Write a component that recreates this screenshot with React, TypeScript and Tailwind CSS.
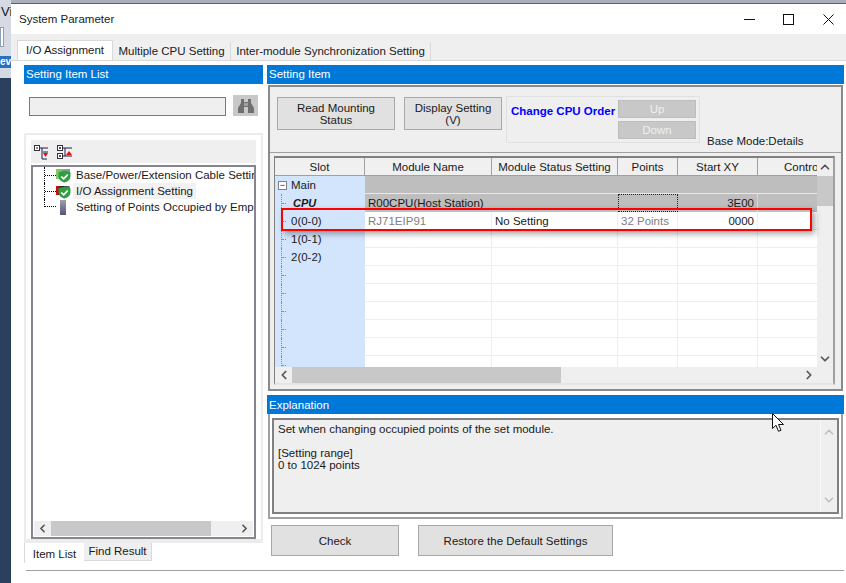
import { ChevronDown, ChevronLeft, ChevronRight, ChevronUp } from "lucide-react";

const columns = [
  { name: "Module Name", width: "w-[127px]" },
  { name: "Module Status Setting", width: "w-[126px]" },
  { name: "Points", width: "w-[60px]" },
  { name: "Start XY", width: "w-[80px]" },
];

const slots = ["", "", "0(0-0)", "1(0-1)", "2(0-2)", "", "", "", "", "", ""];

function GreenCheck({ className }: { className: string }) {
  return (
    <svg viewBox="0 0 12 12" className={className}>
      <path d="M6 .5 11.5 2v4c0 3-3 5-5.500 5.500C3.500 11 .5 9 .5 6V2z" fill="#2f9e44" />
      <path d="M3 6l2.200 2.200L9 4.200" fill="none" stroke="#fff" strokeWidth="1.600" />
    </svg>
  );
}

function TreeIcon({ kind }: { kind: "base" | "io" | "empty" }) {
  return (
    <div className="relative h-[15px] w-[15px] shrink-0">
      {kind === "base" && (
        <div className="absolute left-0 top-[1px] h-[10px] w-[14px] bg-gradient-to-r from-[#7fcf5f] to-[#909090]" />
      )}
      {kind === "io" && (
        <div className="absolute left-0 top-[2px] h-[9px] w-[14px] bg-gradient-to-r from-[#e00000] via-[#111111] to-[#909090]" />
      )}
      {kind === "empty" ? (
        <div className="ml-[4px] h-[15px] w-[6px] bg-gradient-to-b from-[#a0a0a8] to-[#55557f]" />
      ) : (
        <GreenCheck className="absolute left-[2px] top-[2px] h-[13px] w-[13px]" />
      )}
    </div>
  );
}

function Cursor() {
  return (
    <svg viewBox="0 0 13 20" className="absolute left-[772px] top-[413px] h-[20px] w-[13px]">
      <path
        d="M.5.500v15l3.500-3.200 2.500 6 2.500-1-2.500-5.800h5z"
        fill="#fff"
        stroke="#111"
        strokeWidth="1"
      />
    </svg>
  );
}

export default function App() {
  return (
    <div
      className="relative flex h-[583px] w-[846px] overflow-hidden bg-[#2b3f5f] text-[11.5px] leading-[12px] text-[#1a1a1a]"
      style={{ fontFamily: '"Liberation Sans", Arial, sans-serif' }}
    >
      {/* app behind the dialog */}
      <div className="flex h-[78px] w-[11px] flex-col bg-[#d6dbe3] pt-[6px] text-[13px]">
        <span className="pl-[1px]">Vi</span>
        <div className="mt-[9px] h-[20px] w-[4px] border border-[#8aa0b8] bg-white" />
        <div className="mt-[9px] h-[12px] bg-[#2a6fc0] text-[10px] leading-[12px] font-bold text-white">
          ev
        </div>
      </div>

      <div className="flex w-[835px] flex-col">
        <div className="h-[3px] bg-[#a9afbd]" />
        <div className="flex flex-1 flex-col border-t border-[#5a6070] bg-white">
          {/* title bar */}
          <div className="flex h-[30px] items-center pl-[8px] pr-[10px]">
            <span className="flex-1">System Parameter</span>
            <svg viewBox="0 0 11 11" className="mr-[28px] h-[11px] w-[11px]">
              <path d="M0 5.500h11" stroke="#111" strokeWidth="1" />
            </svg>
            <svg viewBox="0 0 11 11" className="mr-[29px] h-[11px] w-[11px]">
              <rect x=".5" y=".5" width="10" height="10" fill="none" stroke="#111" />
            </svg>
            <svg viewBox="0 0 11 11" className="mr-[2px] h-[11px] w-[11px]">
              <path d="M.5.500l10 10M10.500.500l-10 10" stroke="#111" strokeWidth="1" />
            </svg>
          </div>

          {/* tabs */}
          <div className="flex h-[27px] items-end border-b border-[#d9d9d9] bg-[#efefef] pl-[6px]">
            <div className="flex h-[20px] w-[96px] items-center justify-center border border-b-0 border-[#d9d9d9] bg-white pb-[2px]">
              I/O Assignment
            </div>
            <div className="flex h-[18px] w-[118px] items-center justify-center border-r border-[#d9d9d9] bg-[#f0f0f0]">
              Multiple CPU Setting
            </div>
            <div className="flex h-[18px] w-[200px] items-center justify-center border-r border-[#d9d9d9] bg-[#f0f0f0] whitespace-nowrap">
              Inter-module Synchronization Setting
            </div>
          </div>

          <div className="flex flex-1 flex-col pt-[4px] pl-[13px] pr-[2px]">
            <div className="flex gap-[4px]">
              {/* left panel */}
              <div className="flex w-[239px] flex-col">
                <div className="flex h-[19px] items-center bg-[#0078d7] pb-[1px] pl-[2px] text-white">
                  Setting Item List
                </div>
                <div className="flex h-[32px] items-end gap-[7px] pl-[5px]">
                  <div className="h-[19px] w-[197px] border border-[#7a7a7a] bg-[#efefef]" />
                  <div className="flex h-[21px] w-[25px] items-center justify-center bg-[#c8c8c8]">
                    <svg viewBox="0 0 16 14" className="h-[14px] w-[16px]">
                      <path d="M3 0h3v3h4V0h3v4l3 5v5h-6V8H6v6H0V9l3-5z" fill="#6f6f6f" />
                      <path d="M6 4h4v3H6z" fill="#a0a0a0" />
                    </svg>
                  </div>
                </div>
                <div className="mt-[17px] flex h-[410px] flex-col border-2 border-b-4 border-[#ececec] px-[5px] pt-[5px]">
                  <div className="flex h-[23px] items-center gap-[7px] bg-[#efefef] pl-[3px]">
                    <svg viewBox="0 0 16 16" className="h-[16px] w-[16px]">
                      <rect x=".5" y="1.500" width="5" height="5" fill="#fff" stroke="#333" />
                      <path d="M2 4h2M6 4h8M8 4v11h5M9 8h5" stroke="#1c1c50" fill="none" />
                      <path d="M9 9h5l-2.500 4z" fill="#e01010" />
                    </svg>
                    <svg viewBox="0 0 16 16" className="h-[16px] w-[16px]">
                      <rect x=".5" y="1.500" width="5" height="5" fill="#fff" stroke="#333" />
                      <rect x=".5" y="9.500" width="5" height="5" fill="#fff" stroke="#333" />
                      <path d="M2 4h2M3 3v2M2 12h2M3 11v2M6 4h9M6 12h9M8 4v8" stroke="#1c1c50" fill="none" />
                      <path d="M9 11h6l-3-4z" fill="#e01010" />
                    </svg>
                  </div>
                  <div className="mt-[2px] flex min-h-0 flex-1 flex-col border-2 border-[#85858f] bg-white">
                    <div className="flex flex-1 flex-col overflow-hidden pl-[11px]">
                      {[
                        { kind: "base" as const, label: "Base/Power/Extension Cable Setting" },
                        { kind: "io" as const, label: "I/O Assignment Setting" },
                        { kind: "empty" as const, label: "Setting of Points Occupied by Empty Slot" },
                      ].map((item) => (
                        <div key={item.label} className="flex h-[16px] shrink-0 items-center whitespace-nowrap">
                          <div
                            className={
                              item.kind === "empty"
                                ? "h-[8px] w-[12px] shrink-0 -translate-y-[4px] border-b border-l border-dotted border-black"
                                : "flex h-full w-[12px] shrink-0 items-center border-l border-dotted border-black"
                            }
                          >
                            {item.kind !== "empty" && <div className="h-0 w-full border-t border-dotted border-black" />}
                          </div>
                          <TreeIcon kind={item.kind} />
                          <span className={item.kind === "io" ? "ml-[2px] bg-[#f2f2f2] py-[2px] pr-[3px] pl-[3px]" : "pl-[5px]"}>
                            {item.label}
                          </span>
                        </div>
                      ))}
                    </div>
                    <div className="mx-[1px] mb-[1px] flex h-[15px] shrink-0 items-center bg-[#efefef]">
                      <ChevronLeft className="mx-[2px] h-[13px] w-[13px] text-[#555]" strokeWidth={3} />
                      <div className="h-full w-[160px] bg-[#c8c8c8]" />
                      <div className="flex-1" />
                      <ChevronRight className="mx-[2px] h-[13px] w-[13px] text-[#555]" strokeWidth={3} />
                    </div>
                  </div>
                </div>
                <div className="flex h-[20px] items-start">
                  <div className="flex h-[20px] w-[60px] items-center justify-center border-l border-[#d9d9d9] bg-white pt-[2px]">
                    Item List
                  </div>
                  <div className="flex h-[18px] w-[68px] items-center justify-center border-r border-b border-[#d9d9d9] bg-[#efefef] pb-[2px]">
                    Find Result
                  </div>
                </div>
              </div>

              {/* right panel */}
              <div className="flex w-[577px] flex-col">
                <div className="flex h-[19px] items-center bg-[#0078d7] pb-[1px] pl-[2px] text-white">Setting Item</div>
                <div className="mx-[1px] mt-[1px] flex h-[306px] flex-col border-2 border-double border-[#8a8a8a] bg-[#efefef]">
                  <div className="flex h-[66px] shrink-0 border-b border-[#a0a0a0] pt-[10px] pl-[7px]">
                    <div className="flex h-[33px] w-[118px] items-center justify-center border border-[#a8a8a8] bg-[#e1e1e1] text-center">
                      Read Mounting
                      <br />
                      Status
                    </div>
                    <div className="ml-[9px] flex h-[33px] w-[98px] items-center justify-center border border-[#a8a8a8] bg-[#e1e1e1] text-center">
                      Display Setting
                      <br />
                      (V)
                    </div>
                    <div className="-mt-[1px] ml-[4px] flex h-[47px] w-[194px] items-start border border-[#e0e0e0] pt-[3px] pl-[4px]">
                      <span className="mt-[5px] w-[107px] font-bold whitespace-nowrap text-[#0000ff]">Change CPU Order</span>
                      <div className="flex flex-col gap-[3px]">
                        <div className="flex h-[18px] w-[78px] items-center justify-center border border-[#bdbdbd] bg-[#c8c8c8] text-[#f0f0f0]">
                          Up
                        </div>
                        <div className="flex h-[18px] w-[78px] items-center justify-center border border-[#bdbdbd] bg-[#c8c8c8] text-[#f0f0f0]">
                          Down
                        </div>
                      </div>
                    </div>
                    <span className="mt-[38px] ml-[7px] whitespace-nowrap">Base Mode:Details</span>
                  </div>

                  {/* module table */}
                  <div className="mt-[3px] mr-[6px] mb-[4px] ml-[4px] flex min-h-0 flex-1 flex-col overflow-hidden border-t-2 border-r-2 border-b-2 border-l border-t-[#808080] border-r-[#a0a0a0] border-b-[#e4e4e4] border-l-[#808080] bg-white">
                    <div className="flex min-h-0 flex-1">
                      <div className="flex min-w-0 flex-1 flex-col overflow-hidden">
                        <div className="flex h-[18px] shrink-0 border-b border-[#a0a0a0] bg-[#f0f0f0]">
                          <div className="flex w-[90px] items-center justify-center border-r border-[#a0a0a0]">Slot</div>
                          {columns.map((c) => (
                            <div key={c.name} className={`flex ${c.width} items-center justify-center border-r border-[#a0a0a0] whitespace-nowrap`}>
                              {c.name}
                            </div>
                          ))}
                          <div className="flex w-[59px] items-center overflow-hidden pl-[26px] whitespace-nowrap">Control</div>
                        </div>
                        {slots.map((slot, i) => (
                          <div key={i} className="flex h-[18px] shrink-0">
                            <div className="flex w-[90px] items-center bg-[#d3e5fd] pl-[3px]">
                              {i === 0 ? (
                                <>
                                  <span className="mr-[4px] flex h-[9px] w-[9px] items-center justify-center border border-[#808080] bg-white text-[9px] leading-none">
                                    −
                                  </span>
                                  Main
                                </>
                              ) : (
                                <>
                                  <div className="ml-[3px] flex h-full w-[5px] shrink-0 items-center border-l border-dotted border-[#7a8ca8]">
                                    <div className="h-0 w-full border-t border-dotted border-[#7a8ca8]" />
                                  </div>
                                  {i === 1 ? (
                                    <span className="ml-[7px] text-[11px] font-bold italic">CPU</span>
                                  ) : (
                                    <span className="ml-[5px]">{slot}</span>
                                  )}
                                </>
                              )}
                            </div>
                            {i === 0 && <div className="flex-1 border-b border-[#e8e8e8] bg-[#bebebe]" />}
                            {i === 1 && (
                              <>
                                <div className="flex w-[253px] items-center bg-[#bebebe] pl-[3px] whitespace-nowrap">R00CPU(Host Station)</div>
                                <div className="w-[60px] border border-dotted border-[#222] bg-[#bebebe]" />
                                <div className="flex w-[80px] items-center justify-end border-r border-[#d8d8d8] bg-[#bebebe] pr-[3px]">3E00</div>
                                <div className="flex-1 bg-[#bebebe]" />
                              </>
                            )}
                            {i > 1 && (
                              <>
                                <div className="flex w-[127px] items-center border-r border-b border-[#eeeeee] pl-[3px] text-[#808080]">
                                  {i === 2 ? "RJ71EIP91" : ""}
                                </div>
                                <div className="flex w-[126px] items-center border-r border-b border-[#eeeeee] pl-[3px]">
                                  {i === 2 ? "No Setting" : ""}
                                </div>
                                <div className="flex w-[60px] items-center border-r border-b border-[#eeeeee] pl-[3px] text-[#808080]">
                                  {i === 2 ? "32 Points" : ""}
                                </div>
                                <div className="flex w-[80px] items-center justify-end border-r border-b border-[#eeeeee] pr-[3px]">
                                  {i === 2 ? "0000" : ""}
                                </div>
                                <div className="flex-1 border-b border-[#eeeeee]" />
                              </>
                            )}
                          </div>
                        ))}
                      </div>
                      {/* vertical scrollbar */}
                      <div className="flex w-[16px] shrink-0 flex-col items-center bg-[#efefef]">
                        <ChevronUp className="my-[2px] h-[14px] w-[14px] text-[#555]" strokeWidth={3} />
                        <div className="h-[30px] w-full bg-[#c8c8c8]" />
                        <div className="flex-1" />
                        <ChevronDown className="my-[1px] h-[14px] w-[14px] text-[#555]" strokeWidth={3} />
                      </div>
                    </div>
                    <div className="flex h-[16px] shrink-0 items-center bg-[#efefef]">
                      <div className="flex w-[17px] justify-center">
                        <ChevronLeft className="h-[14px] w-[14px] text-[#555]" strokeWidth={3} />
                      </div>
                      <div className="h-full w-[269px] bg-[#c8c8c8]" />
                      <div className="flex-1" />
                      <ChevronRight className="mr-[17px] h-[14px] w-[14px] text-[#555]" strokeWidth={3} />
                    </div>
                  </div>
                </div>

                <div className="mt-[4px] flex h-[19px] items-center bg-[#0078d7] pl-[2px] text-white">Explanation</div>
                <div className="mx-[1px] flex h-[105px] flex-col border-2 border-t-0 border-[#a0a0a0] px-[2px] pt-[4px] pb-[3px]">
                  <div className="flex flex-1 border-2 border-[#808080] bg-[#efefef]">
                    <div className="flex-1 pt-[3px] pl-[4px]">
                      Set when changing occupied points of the set module.
                      <br />
                      <br />
                      [Setting range]
                      <br />0 to 1024 points
                    </div>
                    <div className="flex w-[17px] flex-col items-center justify-between border-l border-[#fafafa] py-[5px] text-[#c0c0c0]">
                      <ChevronUp className="h-[14px] w-[14px]" strokeWidth={3} />
                      <ChevronDown className="h-[14px] w-[14px]" strokeWidth={3} />
                    </div>
                  </div>
                </div>
                <div className="mt-[6px] flex h-[31px] pl-[4px]">
                  <div className="flex w-[128px] items-center justify-center border border-[#a8a8a8] bg-[#e1e1e1]">Check</div>
                  <div className="ml-[19px] flex w-[195px] items-center justify-center border border-[#a8a8a8] bg-[#e1e1e1]">
                    Restore the Default Settings
                  </div>
                </div>
              </div>
            </div>
          </div>
          <div className="mr-[2px] mb-[12px] ml-[15px] h-[1px] bg-[#a0a0a0]" />
        </div>
      </div>

      {/* red highlight drawn over the table */}
      <div className="absolute left-[281px] top-[208px] h-[23px] w-[531px] border-2 border-[#ff0000] shadow-[3px_3px_6px_rgba(0,0,0,0.35)]" />
      <Cursor />
    </div>
  );
}
